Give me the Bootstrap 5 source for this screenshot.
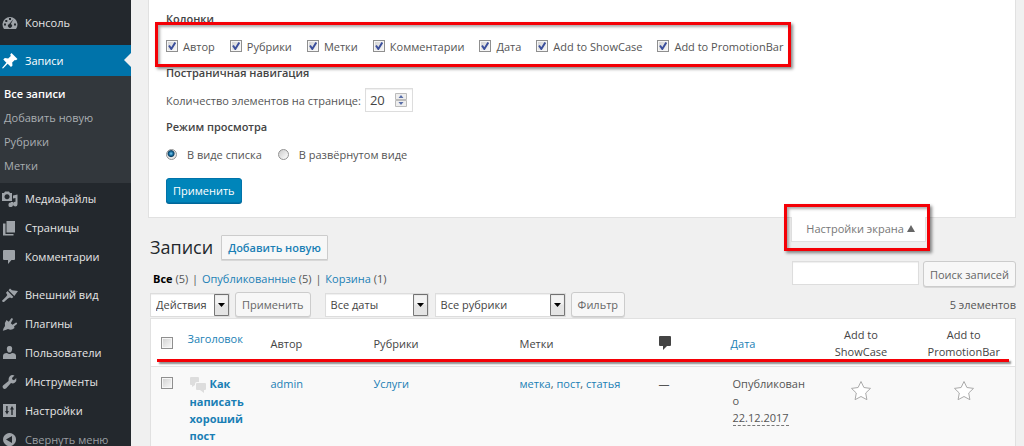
<!DOCTYPE html>
<html lang="ru">
<head>
<meta charset="utf-8">
<meta name="viewport" content="width=device-width, initial-scale=1">
<title>Записи</title>
<link href="https://cdn.jsdelivr.net/npm/bootstrap@5.3.0/dist/css/bootstrap.min.css" rel="stylesheet">
<style>
body{font-family:"Open Sans","Noto Sans",sans-serif;font-size:11px;line-height:17px;color:#555;background:#f0f0f0;height:100vh;overflow:hidden}
a{color:#1a7fb5;text-decoration:none}
.side{width:131px;background:#23282d;color:#e6e6e6;padding-top:8px}
.side a{color:#e6e6e6}
.side .item{height:29px;padding-left:2px;gap:7px;display:flex;align-items:center}
.side .item svg{width:16px;height:16px;fill:#9ea3a8;flex:none}
.side .item.current{height:31px;margin-top:8px;background:#0073aa;color:#fff;position:relative}
.side .item.current svg{fill:#fff}
.side .item.current::after{content:"";position:absolute;right:0;top:8px;border:7px solid transparent;border-left:0;border-right-color:#f0f0f0}
.side .sub{background:#32373c;padding:6px 0 5px 4px;margin-bottom:1px}
.side .sub a{display:block;line-height:24px;color:#a9aeb2}
.side .sub a.on{color:#fff;font-weight:600}
.side .gap-top{margin-top:9px}
.side a.fold{color:#9a9ea2}
.main-area{padding:0 8px 0 17px;min-width:0}
.options{background:#fff;border:1px solid #e1e1e1;border-top:0;padding:9px 17px 14px}
.options h2{font-size:11px;line-height:20px;font-weight:600;color:#444;margin:0}
.options .line{height:24px;margin-top:5px}
.options h2.next{margin-top:5px}
.ticks{gap:15px}
.tick{gap:5px}
.radio-pick{gap:10px}
.frame{border:3px solid #f40006;box-shadow:2px 2px 3px #0007,inset 2px 2px 3px #0005;position:absolute;pointer-events:none;z-index:2}
.frame.cols-frame{inset:-12px -8px -9px -11px}
.frame.tab-frame{inset:-13px -5px -10px -8px}
input[type=checkbox]{appearance:none;width:12px;height:12px;margin:0;border:1px solid #8f8f8f;background:linear-gradient(135deg,#cfcfcf,#fafafa);box-shadow:inset 0 0 0 1px #f6f6f6;flex:none;display:block}
input[type=checkbox]:checked{background:url("data:image/svg+xml,%3Csvg xmlns='http://www.w3.org/2000/svg' viewBox='0 0 10 10'%3E%3Cpath d='M2 4.5 4.3 8 8.3 1.5' fill='none' stroke='%233b4f9c' stroke-width='2'/%3E%3C/svg%3E"),linear-gradient(135deg,#cfcfcf,#fafafa)}
input[type=radio]{appearance:none;width:11px;height:11px;margin:0;border:1px solid #929292;border-radius:50%;background:linear-gradient(135deg,#ccc,#fff);flex:none}
input[type=radio]:checked{background:radial-gradient(circle at 45% 40%,#7ed0f5 0,#156a9c 2px,#0c3e60 3px,#e8e8e8 4px)}
.field{border:1px solid #ddd;background:#fff;color:#444;border-radius:0;outline:0;box-shadow:inset 0 1px 1px #0001}
.count{width:48px;height:24px;padding:0 4px;font-size:13px;appearance:textfield;-moz-appearance:textfield}
.count::-webkit-inner-spin-button{appearance:none}
.spin{position:absolute;right:6px;top:5px;width:12px;height:14px}
.wp-btn{line-height:17px;padding:3px 6px;border:1px solid #ccc;border-radius:3px;background:#f7f7f7;color:#666;box-shadow:0 1px 0 #d8d8d8;white-space:nowrap}
.wp-btn.prime{background:#0085ba;border-color:#0073aa;color:#fff;box-shadow:0 1px 0 #006799;margin-top:12px}
.wp-btn.add{color:#1a7fb5;font-weight:600;border-radius:1px}
.heading-row{height:43px;padding-left:2px}
.title-bar{padding-top:17px}
.tab{width:135px;height:25px;margin:-1px 90px 0 0;position:relative;background:#fff;border:1px solid #e1e1e1;border-top:0}
.tab button{border:0;background:none;color:#777;width:100%;padding:3px 0 0 4px;line-height:18px}
h1{font-size:18px;line-height:25px;font-weight:400;color:#23282d;margin:0}
.views,.filters,.list-wrap{margin-left:2px}
.view-links{padding:9px 0 0 3px}
.sep{margin:0 1px}
.filters{margin-top:5px;height:25px}
.list-wrap{margin-top:1px}
.search{width:127px;height:24px}
select.pick{appearance:none;height:24px;line-height:17px;padding:0 5px;background:#fff url("data:image/svg+xml,%3Csvg xmlns='http://www.w3.org/2000/svg' width='15' height='22'%3E%3Cpath d='M.5.5h14v21H.5z' fill='%23e4e4e4' stroke='%23777'/%3E%3Cpath d='M1.500 1.500h12v9h-12z' fill='%23f3f3f3'/%3E%3Cpath d='M4 9h7l-3.500 4z'/%3E%3C/svg%3E") right center no-repeat}
.s1{width:80px}.s2{width:104px;margin-left:14px}.s3{width:131px;margin-left:6px}
.b1,.b2{margin-left:5px}
.posts{table-layout:fixed;width:100%;background:#fff;border:1px solid #e1e1e1;margin:0}
.posts th,.posts td{padding:8px;vertical-align:top;font-weight:400;overflow-wrap:anywhere}
.posts th{padding:7px 8px 6px;vertical-align:middle;color:#444}
.posts th.up{padding-bottom:15px}
.posts tbody tr{background:#f9f9f9;border-top:1px solid #e1e1e1}
.posts td.in{padding-left:10px;padding-right:0}
.posts .ctr{text-align:center;padding-left:2px;padding-right:2px}
.posts td.star{padding-top:13px}
.posts .box{padding-left:10px}
.posts td.box{padding-top:10px}
.posts strong{font-weight:700}
.rule{position:absolute;left:7px;right:7px;top:41px;height:3px;background:#f40006;box-shadow:2px 2px 2px #0007}
.posts abbr{text-decoration:none;border-bottom:1px dashed #777;cursor:help;line-height:15px;display:inline-block}
</style>
</head>
<body>
<div class="d-flex min-vh-100">
<nav class="side flex-shrink-0">
  <a class="item" href="#"><svg viewBox="0 0 16 16"><path fill-rule="evenodd" d="M2 14a7.500 7.500 0 1 1 12 0zM7 3h2v2H7zM3.300 5h2v2h-2zM2 8.500h2v2H2zM12 8.500h2v2h-2zM11.500 4 8.800 9a2 2 0 1 1-1.600 0z"/></svg>Консоль</a>
  <a class="item current" href="#"><svg viewBox="0 0 16 16"><path d="M9.500 0 15.500 6 14 7.300l-1.200-.3-2.600 2.600.3 3-1.500 1.500-3.300-3.300L1 15.500l-1-.6 4.400-5.200L1.300 6.600l1.500-1.500 3.400.3L8.800 3 8.200 1.500z"/></svg>Записи</a>
  <div class="sub"><a class="on" href="#">Все записи</a><a href="#">Добавить новую</a><a href="#">Рубрики</a><a href="#">Метки</a></div>
  <a class="item" href="#"><svg viewBox="0 0 16 16"><path fill-rule="evenodd" d="M0 2h2l1-1.500h4L8 2h2v8H0zM5 3.200a2.500 2.500 0 1 0 .1 0zM11 4.500 15.500 3.500V13a2.300 2.300 0 1 1-2-2.200V7l-2.500.5zM9 11h2v2.500A2.300 2.300 0 1 1 9 11.500z"/></svg>Медиафайлы</a>
  <a class="item" href="#"><svg viewBox="0 0 16 16"><path d="M4.500 1H13v11.500H4.500zM1 3.500h2.500V14h8v1.500H1z"/></svg>Страницы</a>
  <a class="item" href="#"><svg viewBox="0 0 16 16"><path d="M2 1h10q1 0 1 1v8q0 1-1 1H9.500L6 15v-4H2q-1 0-1-1V2q0-1 1-1z"/></svg>Комментарии</a>
  <a class="item gap-top" href="#"><svg viewBox="0 0 16 16"><path d="M8 1.500 10 3.300 16 4 12.300 9 6.500 3.200zM5.600 4.100l5.800 5.800-1.500 1.300-2-.8-2 1.200L2 15Q.5 15.500 0 13.800l4-4 1.300-1.800-1.300-2.200z"/></svg>Внешний вид</a>
  <a class="item" href="#"><svg viewBox="0 0 16 16"><path d="M4.500 4 6.800 5.700 9.300 2.300q1.500-.6 1.600 1L8.800 7.200l1.700 1.600L14 6.500q1.700 0 1 1.500l-3 2.500.5 1.500Q9.500 15 6 13L3.500 14 .8 14.800l.8-2.600L3 10Q2.300 6.500 4.500 4z"/></svg>Плагины</a>
  <a class="item" href="#"><svg viewBox="0 0 16 16"><path d="M7.500 1C10 1 10.500 3 10 5S8.800 7.500 7.500 7.500 5.500 7 5 5s0-4 2.500-4zM1 14v-3q0-3 4-3 2.500 2 5 0 4 0 4 3v3z"/></svg>Пользователи</a>
  <a class="item" href="#"><svg viewBox="0 0 16 16"><path d="M12.500 1.500 10 4l.3 1.500 1.700.7 2.300-2.200q.6 3-1.300 4.500T9 9L4 14.500q-2 1-3-.5t0-2.500L6.500 7Q6 4 7.800 2.200T12.500 1.500z"/></svg>Инструменты</a>
  <a class="item" href="#"><svg viewBox="0 0 16 16"><path fill-rule="evenodd" d="M1 1h13v13H1zM4.200 3v5H3l2 3.500L7 8H5.600V3zM9.300 12h1.400V6.500H12L10 3 8 6.500h1.300z"/></svg>Настройки</a>
  <a class="item fold" href="#"><svg viewBox="0 0 16 16"><path fill-rule="evenodd" d="M7.500 1a6.500 6.500 0 1 0 .1 0zM10 4v7L4 7.500z"/></svg>Свернуть меню</a>
</nav>

<main class="main-area flex-grow-1">
  <form class="options">
    <h2>Колонки</h2>
    <div class="line ticks d-inline-flex align-items-center position-relative">
      <label class="tick d-flex align-items-center"><input type="checkbox" checked>Автор</label>
      <label class="tick d-flex align-items-center"><input type="checkbox" checked>Рубрики</label>
      <label class="tick d-flex align-items-center"><input type="checkbox" checked>Метки</label>
      <label class="tick d-flex align-items-center"><input type="checkbox" checked>Комментарии</label>
      <label class="tick d-flex align-items-center"><input type="checkbox" checked>Дата</label>
      <label class="tick d-flex align-items-center"><input type="checkbox" checked>Add to ShowCase</label>
      <label class="tick d-flex align-items-center"><input type="checkbox" checked>Add to PromotionBar</label>
      <span class="frame cols-frame"></span>
    </div>
    <h2 class="next">Постраничная навигация</h2>
    <div class="line d-flex align-items-center gap-1">
      <label for="per-page">Количество элементов на странице:</label>
      <span class="position-relative d-flex"><input id="per-page" class="field count" type="number" value="20">
      <svg class="spin" viewBox="0 0 12 14"><path d="M.5.5h11v6H.5zM.5 7.500h11v6H.5z" fill="#eee" stroke="#bbb"/><path d="M6 2l2.500 3h-5zM6 12l2.500-3h-5z" fill="#5a6fa8"/></svg></span>
    </div>
    <h2 class="next">Режим просмотра</h2>
    <div class="line d-flex align-items-center gap-3">
      <label class="radio-pick d-flex align-items-center"><input type="radio" name="mode" checked>В виде списка</label>
      <label class="radio-pick d-flex align-items-center"><input type="radio" name="mode">В развёрнутом виде</label>
    </div>
    <button type="button" class="wp-btn prime">Применить</button>
  </form>

  <div class="heading-row d-flex justify-content-between align-items-start">
    <div class="title-bar d-flex gap-2"><h1>Записи</h1><a href="#" class="wp-btn add">Добавить новую</a></div>
    <div class="tab"><button type="button">Настройки экрана <svg width="8" height="7" viewBox="0 0 8 7" class="mb-1"><path d="M4 0 8 7H0z" fill="#666"/></svg></button><span class="frame tab-frame"></span></div>
  </div>
  <div class="d-flex justify-content-between views">
    <div class="view-links"><a href="#" class="fw-bold text-black">Все</a> (5) <span class="sep">|</span> <a href="#">Опубликованные</a> (5) <span class="sep">|</span> <a href="#">Корзина</a> (1)</div>
    <div class="d-flex gap-1"><input type="search" class="field search" aria-label="Поиск записей"><button type="button" class="wp-btn">Поиск записей</button></div>
  </div>
  <div class="filters d-flex align-items-center">
    <select class="field pick s1" aria-label="Действия"><option>Действия</option></select>
    <button type="button" class="wp-btn b1">Применить</button>
    <select class="field pick s2" aria-label="Даты"><option>Все даты</option></select>
    <select class="field pick s3" aria-label="Рубрики"><option>Все рубрики</option></select>
    <button type="button" class="wp-btn b2">Фильтр</button>
    <span class="ms-auto">5 элементов</span>
  </div>
  <div class="list-wrap position-relative">
  <table class="posts">
    <colgroup><col style="width:29px"><col style="width:83px"><col style="width:103px"><col><col style="width:139px"><col style="width:72px"><col style="width:87px"><col style="width:103px"><col style="width:103px"></colgroup>
    <thead><tr>
      <th class="box"><input type="checkbox" aria-label="Выбрать все"></th><th class="up"><a href="#">Заголовок</a></th><th>Автор</th><th>Рубрики</th><th>Метки</th>
      <th><svg class="d-block" width="13" height="14" viewBox="0 0 13 14" fill="#444"><path d="M1 0h10q1 0 1 1v8q0 1-1 1H8l-4 4v-4H1q-1 0-1-1V1q0-1 1-1z"/></svg></th>
      <th><a href="#">Дата</a></th><th class="ctr">Add to<br>ShowCase</th><th class="ctr">Add to<br>PromotionBar</th>
    </tr></thead>
    <tbody><tr>
      <td class="box"><input type="checkbox" aria-label="Выбрать запись"></td>
      <td class="in"><strong><a href="#"><svg width="16" height="16" viewBox="0 0 16 16" fill="#ddd" class="me-1"><path d="M1 0h7q1 0 1 1v4H7q-2 0-2 2v1L2 10V8H1Q0 8 0 7V1q0-1 1-1zM7 6h8q1 0 1 1v5q0 1-1 1h-1v3l-4-3H7q-1 0-1-1V7q0-1 1-1z"/></svg>Как<br>написать хороший пост</a></strong></td>
      <td><a href="#">admin</a></td><td><a href="#">Услуги</a></td><td><a href="#">метка</a>, <a href="#">пост</a>, <a href="#">статья</a></td><td>—</td>
      <td class="in">Опубликовано<br><abbr title="22.12.2017">22.12.2017</abbr></td>
      <td class="ctr star"><svg width="22" height="22" viewBox="0 0 22 22"><path d="m11 1.500 2.900 6 6.600.9-4.800 4.600 1.200 6.700L11 16.500l-5.900 3.200 1.200-6.700-4.800-4.600 6.600-.9z" fill="#fff" stroke="#aaa" stroke-linejoin="round"/></svg></td>
      <td class="ctr star"><svg width="22" height="22" viewBox="0 0 22 22"><path d="m11 1.500 2.900 6 6.600.9-4.800 4.600 1.200 6.700L11 16.500l-5.900 3.200 1.200-6.700-4.800-4.600 6.600-.9z" fill="#fff" stroke="#aaa" stroke-linejoin="round"/></svg></td>
    </tr></tbody>
  </table>
  <div class="rule"></div>
  </div>
</main>
</div>
<script src="https://cdn.jsdelivr.net/npm/bootstrap@5.3.0/dist/js/bootstrap.bundle.min.js"></script>
</body>
</html>
